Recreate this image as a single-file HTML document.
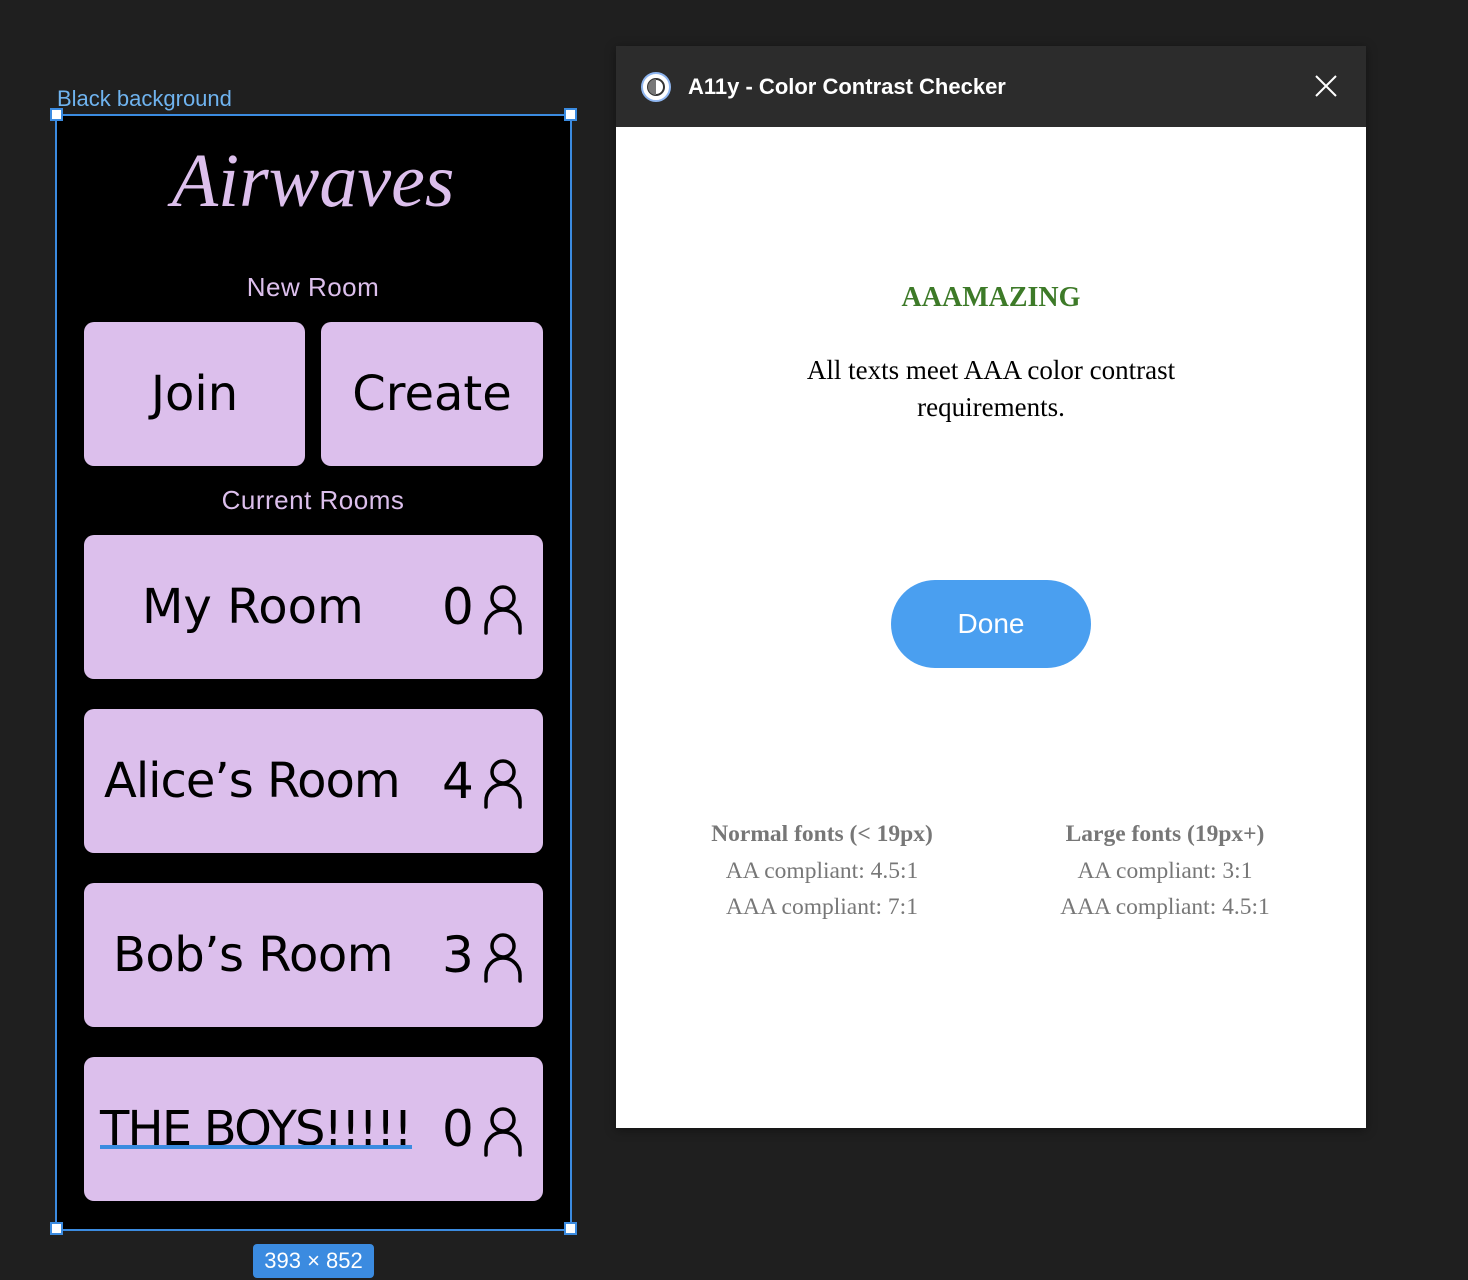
<!DOCTYPE html>
<html><head><style>
body{margin:0;width:1468px;height:1280px;background:#1f1f1f;position:relative;overflow:hidden;font-family:"Liberation Sans",sans-serif}
.a{position:absolute}
.frame{left:55px;top:114px;width:517px;height:1117px;background:#000;border:2px solid #3b8be0;box-sizing:border-box}
.h{width:13px;height:13px;background:#fff;border:2px solid #3b8be0;box-sizing:border-box}
.btn{background:#dcbfec;border-radius:10px;color:#000;font-family:"DejaVu Sans","Liberation Sans",sans-serif;font-size:48px;line-height:144px;height:144px}
.lbl{color:#dcbfec;font-size:26px;width:514px;left:56px;text-align:center;font-weight:300;letter-spacing:0.5px}
.num{font-family:"DejaVu Sans",sans-serif;font-size:50px;left:358px;top:0}
.serif{font-family:"Liberation Serif",serif}
</style></head><body>
<div class="a" style="left:57px;top:86px;color:#6fb3ef;font-size:22px">Black background</div>
<div class="a frame"></div>
<div class="a h" style="left:50px;top:108px"></div>
<div class="a h" style="left:564px;top:108px"></div>
<div class="a h" style="left:50px;top:1222px"></div>
<div class="a h" style="left:564px;top:1222px"></div>
<div class="a" style="left:253px;top:1244px;width:121px;height:34px;background:#3b8be0;border-radius:4px;color:#fff;font-size:22px;text-align:center;line-height:34px">393 × 852</div>
<div class="a" style="left:56px;width:514px;top:138px;text-align:center;color:#dcbfec;font-family:'Liberation Serif',serif;font-style:italic;font-size:76px">Airwaves</div>
<div class="a lbl" style="top:272px">New Room</div>
<div class="a lbl" style="top:485px">Current Rooms</div>
<div class="a btn" style="left:84px;top:322px;width:221px;text-align:center">Join</div>
<div class="a btn" style="left:321px;top:322px;width:222px;text-align:center">Create</div>
<svg width="0" height="0" style="position:absolute"><defs><g id="p" fill="none" stroke="#000" stroke-width="3.5" stroke-linecap="round"><circle cx="19" cy="15" r="11"/><path d="M2 50 V44 a17 17 0 0 1 34 0 V50"/></g></defs></svg>
<div class="a btn" style="left:84px;top:535px;width:459px"><span class="a" style="left:58px">My Room</span><span class="a num">0</span><svg class="a" style="left:400px;top:48px" width="40" height="52"><use href="#p"/></svg></div>
<div class="a btn" style="left:84px;top:709px;width:459px"><span class="a" style="left:20px;letter-spacing:-1px">Alice’s Room</span><span class="a num">4</span><svg class="a" style="left:400px;top:48px" width="40" height="52"><use href="#p"/></svg></div>
<div class="a btn" style="left:84px;top:883px;width:459px"><span class="a" style="left:29px;letter-spacing:-0.5px">Bob’s Room</span><span class="a num">3</span><svg class="a" style="left:400px;top:48px" width="40" height="52"><use href="#p"/></svg></div>
<div class="a btn" style="left:84px;top:1057px;width:459px"><span class="a" style="left:16px;letter-spacing:-1.8px">THE BOYS!!!!!</span><div class="a" style="left:16px;top:88px;width:312px;height:4px;background:#3b8be0"></div><span class="a num">0</span><svg class="a" style="left:400px;top:48px" width="40" height="52"><use href="#p"/></svg></div>

<div class="a" style="left:616px;top:46px;width:750px;height:1082px;background:#fff;box-shadow:0 2px 10px rgba(0,0,0,.4)">
<div class="a" style="left:0;top:0;width:750px;height:81px;background:#2c2c2c"></div>
<svg class="a" style="left:24px;top:25px" width="32" height="32"><circle cx="16" cy="16" r="14" fill="#fff" stroke="#8fb6f0" stroke-width="2"/><circle cx="16" cy="16" r="8" fill="#fff" stroke="#333" stroke-width="2"/><path d="M16 8 a8 8 0 0 0 0 16z" fill="#777"/></svg>
<div class="a" style="left:72px;top:28px;color:#fff;font-size:22px;font-weight:bold">A11y - Color Contrast Checker</div>
<svg class="a" style="left:698px;top:28px" width="24" height="24"><path d="M2 2L22 22M22 2L2 22" stroke="#fff" stroke-width="2"/></svg>
<div class="a serif" style="left:0;width:750px;top:236px;text-align:center;color:#3d7a28;font-weight:bold;font-size:28px">AAAMAZING</div>
<div class="a serif" style="left:165px;width:420px;top:306px;text-align:center;color:#000;font-size:27px;line-height:37px">All texts meet AAA color contrast requirements.</div>
<div class="a" style="left:275px;top:534px;width:200px;height:88px;border-radius:44px;background:#4a9ff0;color:#fff;font-size:28px;text-align:center;line-height:88px">Done</div>
<div class="a serif" style="left:56px;width:300px;top:770px;text-align:center;color:#777;font-size:23.5px;line-height:36.5px"><b>Normal fonts (&lt; 19px)</b><br>AA compliant: 4.5:1<br>AAA compliant: 7:1</div>
<div class="a serif" style="left:399px;width:300px;top:770px;text-align:center;color:#777;font-size:23.5px;line-height:36.5px"><b>Large fonts (19px+)</b><br>AA compliant: 3:1<br>AAA compliant: 4.5:1</div>
</div>
</body></html>
